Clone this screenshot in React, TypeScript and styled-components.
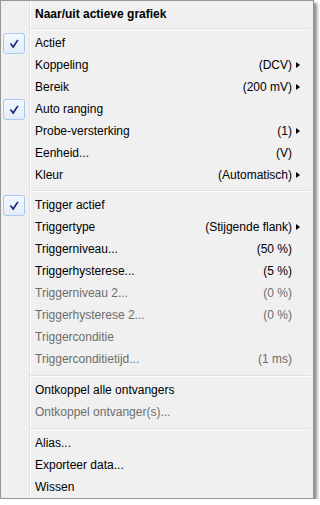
import React from "react";
import styled, { createGlobalStyle } from "styled-components";

const GlobalStyle = createGlobalStyle`
  html, body { margin: 0; padding: 0; background: #ffffff; }
  body { font-family: "Liberation Sans", Arial, sans-serif; }
`;

const Menu = styled.div`
  box-sizing: border-box;
  width: 314px;
  height: 499px;
  border: 1px solid #979797;
  padding-top: 2px;
  background:
    linear-gradient(
      to right,
      #f0f0f0 0,
      #f0f0f0 28px,
      #e2e3e3 28px,
      #e2e3e3 29px,
      #ffffff 29px,
      #ffffff 30px,
      #f0f0f0 30px
    );
  box-shadow: 3px 3px 3px rgba(0, 0, 0, 0.45);
  font-family: "Liberation Sans", Arial, sans-serif;
  font-size: 12px;
  color: #000000;
  -webkit-font-smoothing: subpixel-antialiased;
`;

const Row = styled.div<{ $disabled?: boolean; $bold?: boolean }>`
  display: grid;
  grid-template-columns: 34px 1fr auto 21px;
  align-items: center;
  height: 22px;
  color: ${(p) => (p.$disabled ? "#6d6d6d" : "#000000")};
  font-weight: ${(p) => (p.$bold ? 700 : 400)};
  white-space: nowrap;
`;

const CheckCell = styled.div`
  display: flex;
  align-items: center;
  height: 22px;
`;

const CheckBox = styled.div`
  box-sizing: border-box;
  margin-left: 2px;
  margin-top: 1px;
  width: 22px;
  height: 21px;
  border: 1px solid #a8c8f0;
  border-radius: 3px;
  background: linear-gradient(#f4f8fe, #e3ecfa);
  display: flex;
  align-items: center;
  justify-content: center;
`;

const Label = styled.span`
  line-height: 22px;
`;

const Value = styled.span`
  line-height: 22px;
  text-align: right;
`;

const ArrowCell = styled.div`
  display: flex;
  align-items: center;
  padding-left: 4px;
`;

const Arrow = styled.span`
  width: 0;
  height: 0;
  border-top: 3.5px solid transparent;
  border-bottom: 3.5px solid transparent;
  border-left: 4px solid #000000;
`;

const Separator = styled.div<{ $h: number }>`
  box-sizing: border-box;
  height: ${(p) => p.$h}px;
  padding-top: ${(p) => p.$h - 4}px;
  margin-left: 29px;
  margin-right: 2px;
  &::before {
    content: "";
    display: block;
    border-top: 1px solid #e0e0e0;
    border-bottom: 1px solid #ffffff;
  }
`;

type Item = {
  label: string;
  value?: string;
  arrow?: boolean;
  checked?: boolean;
  disabled?: boolean;
  bold?: boolean;
};

const Check = () => (
  <svg width="10" height="10" viewBox="0 0 10 10">
    <path
      d="M2 5.2 L4.2 8 L8.4 1.6"
      fill="none"
      stroke="#1b2c7a"
      strokeWidth="1.7"
      strokeLinecap="square"
    />
  </svg>
);

const MenuItem = ({ item }: { item: Item }) => (
  <Row $disabled={item.disabled} $bold={item.bold}>
    <CheckCell>
      {item.checked && (
        <CheckBox>
          <Check />
        </CheckBox>
      )}
    </CheckCell>
    <Label>{item.label}</Label>
    <Value>{item.value ?? ""}</Value>
    <ArrowCell>{item.arrow && <Arrow />}</ArrowCell>
  </Row>
);

const groups: { sep: number; items: Item[] }[] = [
  { sep: 0, items: [{ label: "Naar/uit actieve grafiek", bold: true }] },
  {
    sep: 7,
    items: [
      { label: "Actief", checked: true },
      { label: "Koppeling", value: "(DCV)", arrow: true },
      { label: "Bereik", value: "(200 mV)", arrow: true },
      { label: "Auto ranging", checked: true },
      { label: "Probe-versterking", value: "(1)", arrow: true },
      { label: "Eenheid...", value: "(V)" },
      { label: "Kleur", value: "(Automatisch)", arrow: true },
    ],
  },
  {
    sep: 8,
    items: [
      { label: "Trigger actief", checked: true },
      { label: "Triggertype", value: "(Stijgende flank)", arrow: true },
      { label: "Triggerniveau...", value: "(50 %)" },
      { label: "Triggerhysterese...", value: "(5 %)" },
      { label: "Triggerniveau 2...", value: "(0 %)", disabled: true },
      { label: "Triggerhysterese 2...", value: "(0 %)", disabled: true },
      { label: "Triggerconditie", disabled: true },
      { label: "Triggerconditietijd...", value: "(1 ms)", disabled: true },
    ],
  },
  {
    sep: 9,
    items: [
      { label: "Ontkoppel alle ontvangers" },
      { label: "Ontkoppel ontvanger(s)...", disabled: true },
    ],
  },
  {
    sep: 9,
    items: [
      { label: "Alias..." },
      { label: "Exporteer data..." },
      { label: "Wissen" },
    ],
  },
];

export default function App() {
  return (
    <>
      <GlobalStyle />
      <Menu>
        {groups.map((g, gi) => (
          <React.Fragment key={gi}>
            {g.sep > 0 && <Separator $h={g.sep} />}
            {g.items.map((it) => (
              <MenuItem key={it.label} item={it} />
            ))}
          </React.Fragment>
        ))}
      </Menu>
    </>
  );
}
